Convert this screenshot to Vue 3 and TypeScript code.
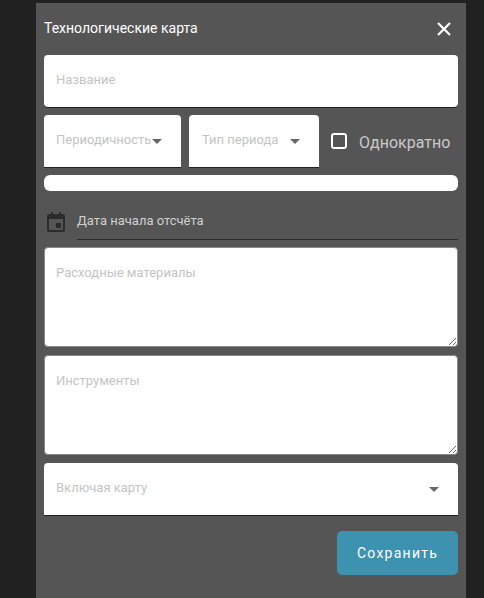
<script setup lang="ts">
const title: string = 'Технологические карта'
</script>

<template>
  <div class="page">
    <section class="dialog">
      <header class="head">
        <h2 class="title">{{ title }}</h2>
        <svg class="close" viewBox="0 0 16 16" aria-hidden="true">
          <path d="M2 2 14 14M14 2 2 14" fill="none" stroke="#fff" stroke-width="2.2" />
        </svg>
      </header>

      <div class="field field-tall">
        <input class="input" placeholder="Название" />
      </div>

      <div class="row">
        <div class="field select period">
          <span class="ph">Периодичность</span>
          <i class="caret"></i>
        </div>
        <div class="field select type">
          <span class="ph">Тип периода</span>
          <i class="caret"></i>
        </div>
        <label class="check">
          <span class="box"></span>
          <span class="check-label">Однократно</span>
        </label>
      </div>

      <div class="thin"></div>

      <div class="date">
        <svg class="cal" viewBox="0 0 18 20" aria-hidden="true">
          <path fill="#2b2b2b" d="M2 2h2V0h2v2h6V0h2v2h2a2 2 0 0 1 2 2v14a2 2 0 0 1-2 2H2a2 2 0 0 1-2-2V4a2 2 0 0 1 2-2Zm0 5v11h14V7H2Z" />
          <rect x="9" y="11" width="5" height="5" fill="#2b2b2b" />
        </svg>
        <div class="date-text">Дата начала отсчёта</div>
      </div>

      <textarea class="area" placeholder="Расходные материалы"></textarea>
      <textarea class="area" placeholder="Инструменты"></textarea>

      <div class="field select full">
        <span class="ph">Включая карту</span>
        <i class="caret"></i>
      </div>

      <footer class="foot">
        <button class="save" type="button">Сохранить</button>
      </footer>
    </section>
  </div>
</template>

<style>
html, body { margin: 0; background: #212121; overflow: hidden; }
</style>

<style scoped>
.page {
  width: 484px;
  height: 598px;
  box-sizing: border-box;
  padding: 3px 18px 0 36px;
  background: #212121;
  overflow: hidden;
  font-family: Roboto, "Noto Sans", sans-serif;
}
.dialog {
  width: 430px;
  height: 595px;
  box-sizing: border-box;
  padding: 0 8px;
  background: #555;
  display: flex;
  flex-direction: column;
}
.head {
  height: 52px;
  flex: none;
  display: flex;
  align-items: center;
  justify-content: space-between;
}
.title {
  margin: 0 0 2px;
  font-size: 14px;
  font-weight: 400;
  color: #fff;
}
.close {
  width: 16px;
  height: 16px;
  margin-right: 6px;
}
.field {
  height: 52px;
  box-sizing: border-box;
  flex: none;
  background: #fff;
  box-shadow: 0 1px 0 #222;
  border-radius: 4px 4px 0 0;
}
.field-tall {
  border-radius: 4px;
  margin-bottom: 8px;
}
.input {
  display: block;
  width: 100%;
  height: 100%;
  box-sizing: border-box;
  padding: 0 12px 4px;
  border: 0;
  outline: 0;
  background: transparent;
  font: 400 13px Roboto, sans-serif;
}
.input::placeholder, .area::placeholder {
  color: #c4c4c4;
  opacity: 1;
}
.row {
  display: flex;
  gap: 8px;
  margin-bottom: 8px;
}
.select {
  display: flex;
  align-items: center;
  justify-content: space-between;
}
.period {
  width: 137px;
  padding: 0 19px 0 12px;
}
.type {
  width: 130px;
  padding: 0 19px 0 13px;
}
.full {
  padding: 0 19px 0 12px;
}
.ph {
  color: #c4c4c4;
  font-size: 13px;
  margin-bottom: 3px;
}
.caret {
  width: 0;
  height: 0;
  margin-top: 1px;
  border-left: 5px solid transparent;
  border-right: 5px solid transparent;
  border-top: 5px solid #666;
}
.check {
  display: flex;
  align-items: center;
  margin-left: 4px;
  flex: 1;
}
.box {
  width: 16px;
  height: 16px;
  box-sizing: border-box;
  border: 2px solid #fff;
  border-radius: 3px;
}
.check-label {
  margin: 2px 0 0 12px;
  color: #c9c9c9;
  font-size: 16px;
}
.thin {
  height: 16px;
  flex: none;
  background: #fff;
  border-radius: 6px;
  margin-bottom: 13px;
}
.date {
  height: 36px;
  flex: none;
  display: flex;
  margin-bottom: 7px;
}
.cal {
  width: 18px;
  height: 20px;
  margin: 8px 12px 0 3px;
  flex: none;
}
.date-text {
  flex: 1;
  box-sizing: border-box;
  height: 36px;
  padding-top: 9px;
  border-bottom: 1px solid #2b2b2b;
  color: #d0d0d0;
  font-size: 13px;
  line-height: 16px;
}
.area {
  display: block;
  width: 100%;
  height: 100px;
  flex: none;
  box-sizing: border-box;
  margin: 0 0 8px;
  padding: 16px 11px;
  background: #fff;
  border: 1px solid #8a8a8a;
  border-radius: 4px;
  outline: 0;
  font: 400 13px/18px Roboto, sans-serif;
}
.foot {
  display: flex;
  justify-content: flex-end;
  margin-top: 16px;
}
.save {
  width: 121px;
  height: 44px;
  border: 0;
  border-radius: 5px;
  background: #3d92b0;
  color: #fff;
  font: 400 14px Roboto, sans-serif;
  letter-spacing: 1.25px;
}
</style>
